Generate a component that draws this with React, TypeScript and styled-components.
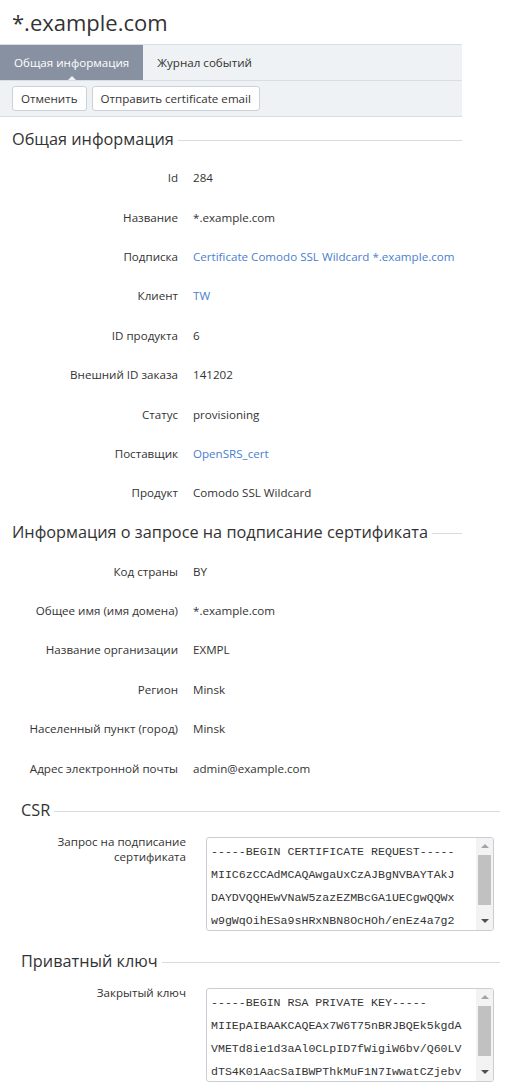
import React from "react";
import styled, { createGlobalStyle } from "styled-components";

const GlobalStyle = createGlobalStyle`
  html, body { margin: 0; padding: 0; background: #fff; }
  body {
    font-family: "Open Sans", "Liberation Sans", sans-serif;
    color: #333;
    font-size: 11.6px;
  }
  * { box-sizing: border-box; }
`;

const Page = styled.div`
  width: 505px;
  padding-bottom: 20px;
`;

const Title = styled.h1`
  margin: 0;
  height: 44px;
  display: flex;
  align-items: center;
  padding: 0 12px;
  font-size: 22px;
  font-weight: 400;
  color: #333;
`;

const TabBar = styled.div`
  width: 462px;
  height: 37px;
  display: flex;
  background: #eef2f5;
  border-top: 1px solid #d9dee5;
  border-bottom: 1px solid #d9dee5;
`;

const Tab = styled.div<{ $active?: boolean }>`
  position: relative;
  display: flex;
  align-items: center;
  padding: 0 14px;
  height: 100%;
  font-size: 11.6px;
  color: ${(p) => (p.$active ? "#fff" : "#333")};
  background: ${(p) => (p.$active ? "#8891a1" : "transparent")};
  ${(p) =>
    p.$active &&
    `
    &::after {
      content: "";
      position: absolute;
      left: 50%;
      bottom: 0;
      margin-left: -4px;
      border-left: 4px solid transparent;
      border-right: 4px solid transparent;
      border-bottom: 4px solid #eff2f5;
    }
  `}
`;

const Toolbar = styled.div`
  width: 462px;
  height: 36px;
  display: flex;
  align-items: center;
  gap: 5px;
  padding: 0 12px;
  background: #eff2f5;
  border-bottom: 1px solid #d9dee5;
`;

const Button = styled.button`
  height: 25px;
  padding: 0 8px;
  font-family: "Open Sans", "Liberation Sans", sans-serif;
  font-size: 11.6px;
  color: #333;
  background: #fff;
  border: 1px solid #ccd2da;
  border-radius: 3px;
`;

const Section = styled.section<{ $inset?: boolean }>`
  width: ${(p) => (p.$inset ? "500px" : "462px")};
  padding-left: ${(p) => (p.$inset ? "21px" : "12px")};
`;

const Heading = styled.div`
  height: 39px;
  display: flex;
  align-items: center;
  gap: 4px;
  font-size: 16.3px;
  color: #333;
  white-space: nowrap;
  &::after {
    content: "";
    flex: 1;
    height: 1px;
    margin-top: 3px;
    background: #d7dce3;
  }
`;

const Rows = styled.div<{ $label: number; $gap: number }>`
  display: grid;
  grid-template-columns: ${(p) => p.$label}px 1fr;
  column-gap: ${(p) => p.$gap}px;
`;

const Label = styled.div`
  height: 39.4px;
  display: flex;
  align-items: center;
  justify-content: flex-end;
  text-align: right;
  white-space: nowrap;
  color: #333;
`;

const Value = styled.div`
  height: 39.4px;
  display: flex;
  align-items: center;
  white-space: nowrap;
  color: #333;
`;

const Link = styled.a`
  color: #4a80d0;
  text-decoration: none;
`;

const FieldLabel = styled.div`
  text-align: right;
  line-height: 15px;
  padding-top: 4px;
  color: #333;
`;

const FieldWrap = styled.div`
  padding: 7px 0 11px;
`;

const CodeBox = styled.div`
  position: relative;
  width: 288px;
  height: 94px;
`;

const Code = styled.textarea`
  display: block;
  width: 100%;
  height: 100%;
  margin: 0;
  padding: 2px 20px 1px 4px;
  font-family: "Courier New", "Liberation Mono", monospace;
  font-size: 11.6px;
  line-height: 23px;
  color: #333;
  border: 1px solid #c9ced6;
  border-radius: 3px;
  resize: none;
  background: #fff;
  outline: none;
  overflow: hidden;
  scrollbar-width: none;
`;

const ScrollBar = styled.div`
  position: absolute;
  top: 1px;
  right: 1px;
  bottom: 1px;
  width: 17px;
  display: flex;
  flex-direction: column;
  background: #f3f3f3;
  border-radius: 0 2px 2px 0;
`;

const Arrow = styled.div<{ $down?: boolean }>`
  height: 17px;
  display: flex;
  align-items: center;
  justify-content: center;
  &::before {
    content: "";
    border-left: 4px solid transparent;
    border-right: 4px solid transparent;
    ${(p) =>
      p.$down
        ? "border-top: 4px solid #505050;"
        : "border-bottom: 4px solid #a3a3a3;"}
  }
`;

const Track = styled.div`
  flex: 1;
  padding: 0 2px;
`;

const Thumb = styled.div<{ $h: number }>`
  height: ${(p) => p.$h}px;
  background: #c1c1c1;
`;

const Spacer = styled.div<{ $h: number }>`
  height: ${(p) => p.$h}px;
`;

const CodeField = ({ value }: { value: string }) => (
  <CodeBox>
    <Code readOnly defaultValue={value} />
    <ScrollBar>
      <Arrow />
      <Track>
        <Thumb $h={50} />
      </Track>
      <Arrow $down />
    </ScrollBar>
  </CodeBox>
);

const csr = [
  "-----BEGIN CERTIFICATE REQUEST-----",
  "MIIC6zCCAdMCAQAwgaUxCzAJBgNVBAYTAkJ",
  "DAYDVQQHEwVNaW5zazEZMBcGA1UECgwQQWx",
  "w9gWqOihESa9sHRxNBN8OcHOh/enEz4a7g2",
  "KoZIhvcNAQkBFhFhZG1pbkBleGFtcGxlLmN",
  "b20wggEiMA0GCSqGSIb3DQEBAQUAA4IBDwA",
  "-----END CERTIFICATE REQUEST-----",
].join("\n");

const key = [
  "-----BEGIN RSA PRIVATE KEY-----",
  "MIIEpAIBAAKCAQEAx7W6T75nBRJBQEk5kgdA",
  "VMETd8ie1d3aAl0CLpID7fWigiW6bv/Q60LV",
  "dTS4K01AacSaIBWPThkMuF1N7IwwatCZjebv",
  "Qk9Xc3pLq7gYtH2mR8sVnW0aZ1fE4uJ6oP3d",
  "-----END RSA PRIVATE KEY-----",
].join("\n");

type Item = { label: string; value: string; link?: boolean };

const general: Item[] = [
  { label: "Id", value: "284" },
  { label: "Название", value: "*.example.com" },
  { label: "Подписка", value: "Certificate Comodo SSL Wildcard *.example.com", link: true },
  { label: "Клиент", value: "TW", link: true },
  { label: "ID продукта", value: "6" },
  { label: "Внешний ID заказа", value: "141202" },
  { label: "Статус", value: "provisioning" },
  { label: "Поставщик", value: "OpenSRS_cert", link: true },
  { label: "Продукт", value: "Comodo SSL Wildcard" },
];

const request: Item[] = [
  { label: "Код страны", value: "BY" },
  { label: "Общее имя (имя домена)", value: "*.example.com" },
  { label: "Название организации", value: "EXMPL" },
  { label: "Регион", value: "Minsk" },
  { label: "Населенный пункт (город)", value: "Minsk" },
  { label: "Адрес электронной почты", value: "admin@example.com" },
];

const InfoRows = ({ items }: { items: Item[] }) => (
  <Rows $label={166} $gap={15}>
    {items.map((it) => (
      <React.Fragment key={it.label}>
        <Label>{it.label}</Label>
        <Value>{it.link ? <Link href="#">{it.value}</Link> : it.value}</Value>
      </React.Fragment>
    ))}
  </Rows>
);

export default function App() {
  return (
    <Page>
      <GlobalStyle />
      <Title>*.example.com</Title>
      <TabBar>
        <Tab $active>Общая информация</Tab>
        <Tab>Журнал событий</Tab>
      </TabBar>
      <Toolbar>
        <Button>Отменить</Button>
        <Button>Отправить certificate email</Button>
      </Toolbar>
      <Spacer $h={2} />
      <Section>
        <Heading>Общая информация</Heading>
        <InfoRows items={general} />
      </Section>
      <Section>
        <Heading>Информация о запросе на подписание сертификата</Heading>
        <InfoRows items={request} />
      </Section>
      <Spacer $h={3} />
      <Section $inset>
        <Heading>CSR</Heading>
        <Rows $label={165} $gap={20}>
          <FieldLabel>Запрос на подписание сертификата</FieldLabel>
          <FieldWrap>
            <CodeField value={csr} />
          </FieldWrap>
        </Rows>
      </Section>
      <Section $inset>
        <Heading>Приватный ключ</Heading>
        <Rows $label={165} $gap={20}>
          <FieldLabel>Закрытый ключ</FieldLabel>
          <FieldWrap>
            <CodeField value={key} />
          </FieldWrap>
        </Rows>
      </Section>
    </Page>
  );
}
